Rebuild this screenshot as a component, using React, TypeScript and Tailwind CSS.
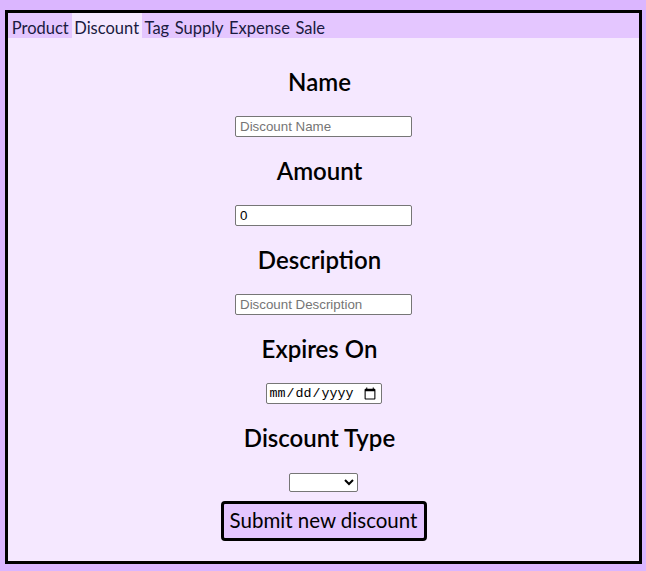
import React from 'react';

const tabs = ['Product', 'Discount', 'Tag', 'Supply', 'Expense', 'Sale'];

const Field = ({ label, children }: { label: string, children: React.ReactNode }) => (
    <>
        <h2 className="text-[24px] font-semibold leading-[30px] my-[19px] pr-[8px] text-black">{label}</h2>
        {children}
    </>
);

const textInput = "w-[177px] h-[21px] bg-white border border-[#767676] rounded-[2px] px-[4px] text-[13.33px] text-black placeholder:text-[#757575] font-['Liberation_Sans',Arial,sans-serif] outline-none";

export default function App() {
    return (
        <div className="min-h-[571px] bg-[#dbb6ff] pt-[10px] pl-[5px] pr-[4px] pb-[7px] font-['Lato',sans-serif]">
            <div className="h-[554px] border-[3px] border-black bg-[#f5e8ff] flex flex-col">
                <nav className="flex h-[25px] bg-[#e4c6ff] pl-[1px] text-[16.5px] text-[#1a1a40]">
                    {tabs.map(t => (
                        <span key={t} className={`h-full flex items-center pt-[5px] px-[2.75px] ${t === 'Discount' ? 'bg-[#f5e8ff]' : ''}`}>{t}</span>
                    ))}
                </nav>
                <form className="flex flex-col items-center pt-[10px]" onSubmit={e => e.preventDefault()}>
                    <Field label="Name">
                        <input className={textInput} placeholder="Discount Name" />
                    </Field>
                    <Field label="Amount">
                        <input className={textInput} defaultValue="0" />
                    </Field>
                    <Field label="Description">
                        <input className={textInput} placeholder="Discount Description" />
                    </Field>
                    <Field label="Expires On">
                        <input type="date" className="w-[116px] h-[21px] bg-white border border-[#767676] rounded-[2px] px-[2px] text-[13.33px] text-black font-['Liberation_Mono',monospace]" />
                    </Field>
                    <Field label="Discount Type">
                        <select className="w-[69px] h-[19px] mt-[1px] bg-white border border-[#767676] rounded-[2px] text-[13.33px]">
                            <option></option>
                            <option>Percent</option>
                            <option>Fixed</option>
                        </select>
                    </Field>
                    <button type="submit" className="mt-[9px] w-[206px] h-[40px] border-[3px] border-black rounded-[4px] bg-[#e4c6ff] text-[20.5px] leading-[30px] pb-[2px] text-black">
                        Submit new discount
                    </button>
                </form>
            </div>
        </div>
    );
}
